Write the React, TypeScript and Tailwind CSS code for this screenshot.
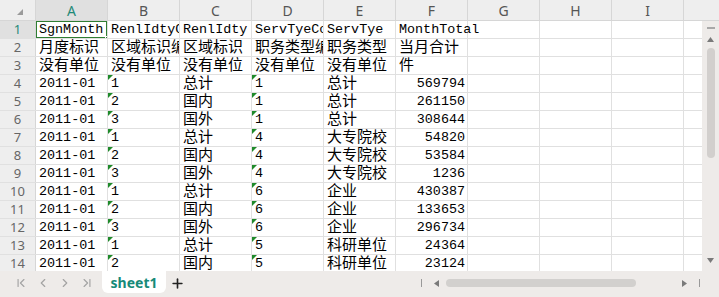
import { ChevronFirst, ChevronLast, ChevronLeft, ChevronRight, Plus } from 'lucide-react'

type Cell = { t: string; cjk?: boolean; right?: boolean; tri?: boolean; spill?: boolean }

const L = (t: string, extra: Partial<Cell> = {}): Cell => ({ t, ...extra })
const C = (t: string): Cell => ({ t, cjk: true })

const data: [string, string, string, string, string][] = [
  ['1', '总计', '1', '总计', '569794'],
  ['2', '国内', '1', '总计', '261150'],
  ['3', '国外', '1', '总计', '308644'],
  ['1', '总计', '4', '大专院校', '54820'],
  ['2', '国内', '4', '大专院校', '53584'],
  ['3', '国外', '4', '大专院校', '1236'],
  ['1', '总计', '6', '企业', '430387'],
  ['2', '国内', '6', '企业', '133653'],
  ['3', '国外', '6', '企业', '296734'],
  ['1', '总计', '5', '科研单位', '24364'],
  ['2', '国内', '5', '科研单位', '23124'],
]

const rows: Cell[][] = [
  [L('SgnMonth'), L('RenlIdtyCode'), L('RenlIdty'), L('ServTyeCode'), L('ServTye'), L('MonthTotal', { spill: true })],
  [C('月度标识'), C('区域标识编码'), C('区域标识'), C('职务类型编码'), C('职务类型'), C('当月合计')],
  [C('没有单位'), C('没有单位'), C('没有单位'), C('没有单位'), C('没有单位'), C('件')],
  ...data.map(([b, c, d, e, f]) => [
    L('2011-01'),
    L(b, { tri: true }),
    C(c),
    L(d, { tri: true }),
    C(e),
    L(f, { right: true }),
  ]),
]

const cols = ['A', 'B', 'C', 'D', 'E', 'F', 'G', 'H', 'I']

function GridCell({ cell, selected }: { cell?: Cell; selected?: boolean }) {
  return (
    <div
      className={
        'relative flex h-full w-[72px] shrink-0 items-center whitespace-nowrap border-r border-[#e0e0e0] px-[3px] text-black ' +
        (cell?.spill ? 'overflow-visible z-10 ' : 'overflow-hidden ') +
        (cell?.right ? 'justify-end pr-[2px] ' : '') +
        (cell?.cjk
          ? "pb-[4px] font-['Noto_Sans_CJK_SC',sans-serif] text-[15px] leading-none"
          : "pt-[1px] font-['Liberation_Mono',monospace] text-[13.4px] leading-none")
      }
    >
      {cell?.tri && (
        <svg className="absolute left-0 top-0" width="5" height="5" viewBox="0 0 5 5">
          <polygon points="0,0 5,0 0,5" fill="#1f8a2a" />
        </svg>
      )}
      {cell?.t}
      {selected && (
        <div className="absolute -left-[1px] -top-[1px] h-[19px] w-[73px] border-2 border-[#2f7d32]">
          <div className="absolute -bottom-[4px] -right-[4px] h-[5px] w-[5px] border border-white bg-[#2f7d32]" />
        </div>
      )}
    </div>
  )
}

export default function App() {
  return (
    <div className="flex h-[297px] w-[719px] flex-col overflow-hidden bg-white">
      <div className="flex h-[271px]">
        <div className="flex-1 overflow-hidden">
          <div className="flex h-[21px] border-b border-[#d6d6d6] bg-[#eeeeee] font-['Noto_Sans',sans-serif] text-[14px] text-[#555]">
            <div className="flex w-[36px] shrink-0 items-center justify-center border-r border-[#d6d6d6] pl-[4px] pt-[4px]">
              <svg width="6" height="6" viewBox="0 0 6 6">
                <polygon points="6,0 6,6 0,6" fill="#9a9a9a" />
              </svg>
            </div>
            {cols.map((c) => (
              <div
                key={c}
                className={
                  'flex w-[72px] shrink-0 items-center justify-center border-r border-[#d6d6d6] ' +
                  (c === 'A' ? 'bg-[#e0e0e0] text-[#1f8a78]' : '')
                }
              >
                {c}
              </div>
            ))}
            <div className="w-[20px] shrink-0" />
          </div>
          {rows.map((r, i) => (
            <div key={i} className="flex h-[18px] shrink-0 border-b border-[#e0e0e0]">
              <div
                className={
                  "flex w-[36px] shrink-0 items-center justify-center border-r border-[#d6d6d6] font-['Noto_Sans',sans-serif] text-[13px] " +
                  (i === 0 ? 'bg-[#e0e0e0] text-[#1f8a78]' : 'bg-[#eeeeee] text-[#666]')
                }
              >
                {i + 1}
              </div>
              {cols.map((c, j) => (
                <GridCell key={c} cell={r[j]} selected={i === 0 && j === 0} />
              ))}
              <div className="w-[20px] shrink-0" />
            </div>
          ))}
        </div>
        <div className="flex w-[17px] shrink-0 flex-col">
          <div className="h-[21px] shrink-0 border-b border-[#d6d6d6] bg-[#eeeeee]" />
          <div className="flex flex-1 flex-col items-center bg-[#eeebe9] pt-[6px]">
            <div className="h-[2px] w-[8px] bg-[#a8a8a8]" />
            <svg className="mt-[8px]" width="7" height="5" viewBox="0 0 7 5">
              <polygon points="3.5,0 7,5 0,5" fill="#7a7a7a" />
            </svg>
            <div className="mt-[6px] h-[110px] w-[8px] rounded-full bg-[#d2cfcd]" />
            <div className="flex-1" />
            <svg className="mb-[8px]" width="7" height="5" viewBox="0 0 7 5">
              <polygon points="0,0 7,0 3.5,5" fill="#7a7a7a" />
            </svg>
          </div>
        </div>
      </div>
      <div className="flex h-[26px] items-start bg-[#eeebe9]">
        <div className="flex h-[24px] items-center gap-[8px] pl-[14px] text-[#a3a3a3]">
          <ChevronFirst size={14} strokeWidth={2} />
          <ChevronLeft size={14} strokeWidth={2} />
          <ChevronRight size={14} strokeWidth={2} />
          <ChevronLast size={14} strokeWidth={2} />
        </div>
        <div className="ml-[8px] flex h-[22px] w-[64px] items-center justify-center rounded-b-[6px] bg-white font-['Noto_Sans',sans-serif] text-[14px] font-bold text-[#168a78]">
          sheet1
        </div>
        <div className="ml-[4px] flex h-[24px] items-center text-[#222]">
          <Plus size={15} strokeWidth={2.6} />
        </div>
        <div className="flex-1" />
        <div className="flex h-[24px] items-center">
          <div className="h-[8px] w-[1px] bg-[#999]" />
          <svg className="ml-[12px]" width="5" height="7" viewBox="0 0 5 7">
            <polygon points="5,0 5,7 0,3.5" fill="#7a7a7a" />
          </svg>
          <div className="ml-[7px] h-[8px] w-[190px] rounded-full bg-[#d2d0ce]" />
          <svg className="ml-[46px]" width="5" height="7" viewBox="0 0 5 7">
            <polygon points="0,0 5,3.5 0,7" fill="#7a7a7a" />
          </svg>
          <div className="ml-[12px] h-[8px] w-[1px] bg-[#999]" />
          <div className="w-[19px]" />
        </div>
      </div>
    </div>
  )
}
